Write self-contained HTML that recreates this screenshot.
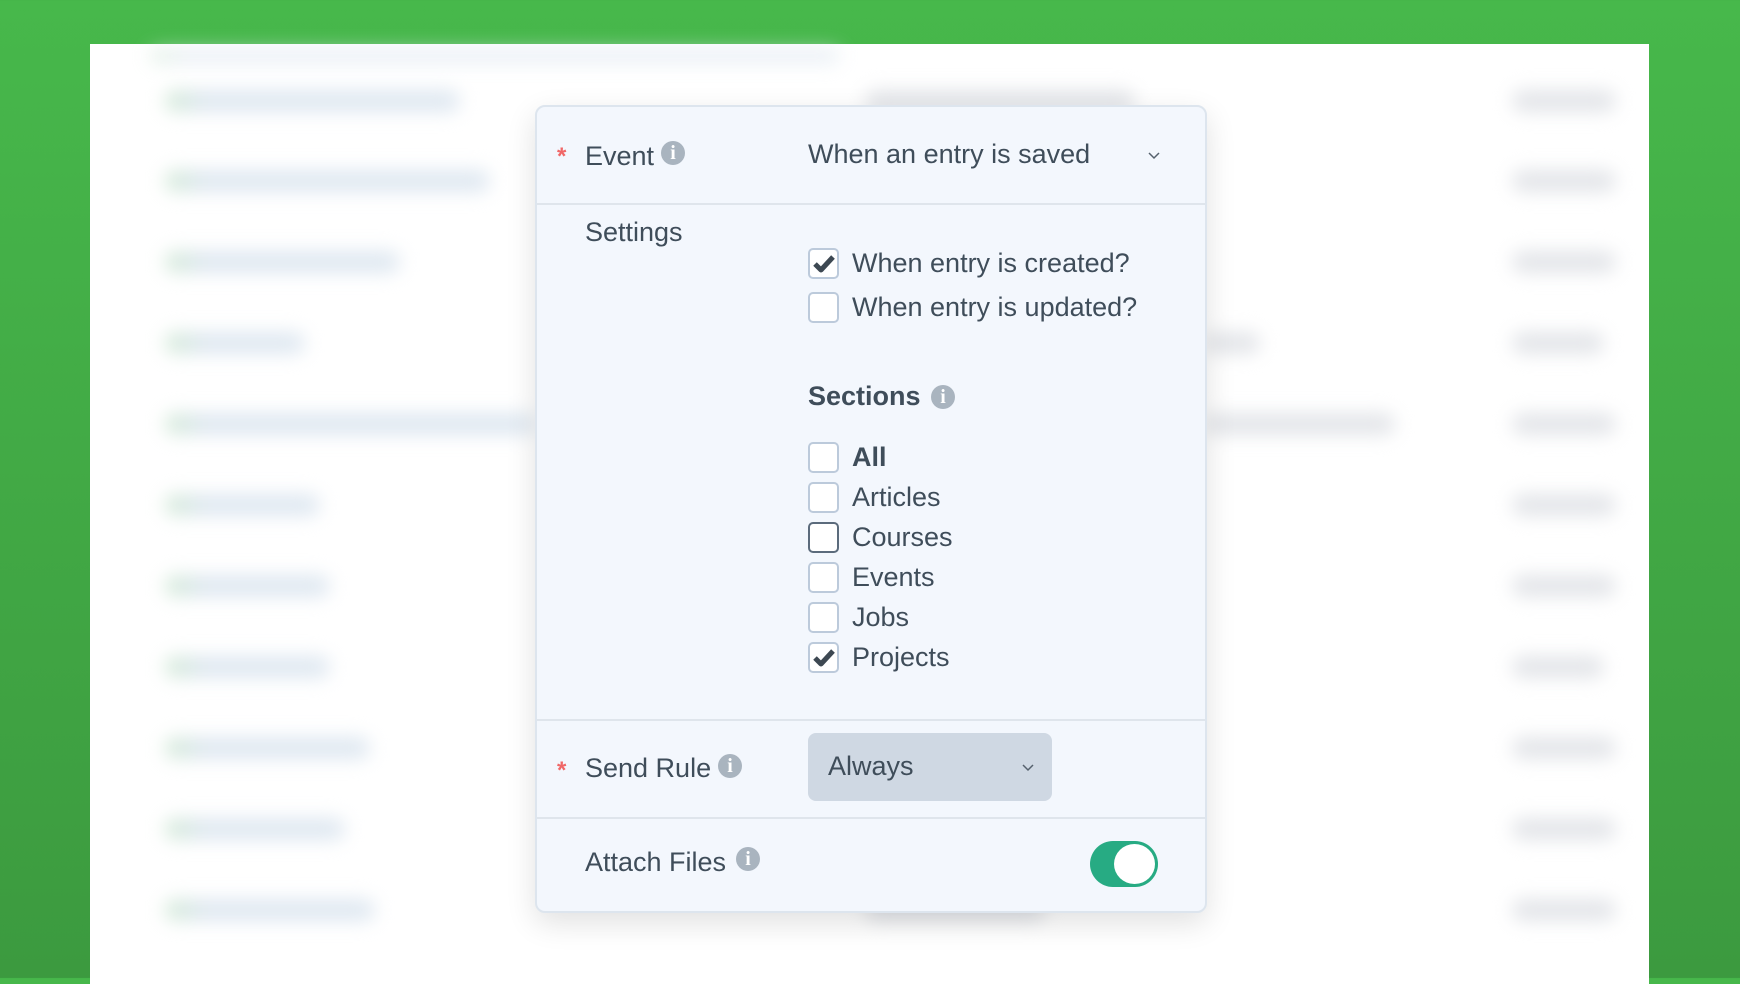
<!DOCTYPE html>
<html><head><meta charset="utf-8"><style>
*{margin:0;padding:0;box-sizing:border-box}
body{width:1740px;height:978px;overflow:hidden;background:linear-gradient(#47b84b,#3c9a3f);font-family:"Liberation Sans",sans-serif;position:relative}
.panel{position:absolute;left:90px;top:44px;width:1559px;height:940px;background:#fff}
.b{position:absolute;height:22px;border-radius:11px;filter:blur(9px)}
.l{background:linear-gradient(90deg,#d3ead6 0,#dfe8f1 40px)}
.g{background:#e3e5e9}
.card{position:absolute;left:535px;top:105px;width:672px;height:808px;background:#f3f7fd;border:2px solid #dde5ee;border-radius:10px;box-shadow:0 10px 30px rgba(0,0,0,.12);color:#3f4d5a}
.hr{position:absolute;left:0;right:0;height:2px;background:#dfe5ec}
.t{position:absolute;font-size:27px;line-height:30px;white-space:nowrap}
.ast{position:absolute;color:#f06767;font-size:24px;font-weight:bold}
.info{position:absolute;width:24px;height:24px;border-radius:50%;background:#a9b4bf;color:#fff;font:bold 20px/25px "Liberation Serif",serif;text-align:center}
.cb{position:absolute;left:271px;width:31px;height:31px;background:#fff;border:2px solid #bccadb;border-radius:5px}
.cb svg{position:absolute;left:2px;top:3px}
</style></head><body>
<div class="panel"></div>
<div class="b l" style="left:150px;top:48px;width:690px;height:16px;opacity:.6"></div>
<div class="b l" style="left:165px;top:90px;width:295px"></div>
<div class="b l" style="left:165px;top:170px;width:325px"></div>
<div class="b l" style="left:165px;top:251px;width:235px"></div>
<div class="b l" style="left:165px;top:332px;width:140px"></div>
<div class="b l" style="left:165px;top:413px;width:370px"></div>
<div class="b l" style="left:165px;top:494px;width:155px"></div>
<div class="b l" style="left:165px;top:575px;width:165px"></div>
<div class="b l" style="left:165px;top:656px;width:165px"></div>
<div class="b l" style="left:165px;top:737px;width:205px"></div>
<div class="b l" style="left:165px;top:818px;width:180px"></div>
<div class="b l" style="left:165px;top:899px;width:210px"></div>
<div class="b g" style="left:865px;top:90px;width:270px"></div>
<div class="b g" style="left:1205px;top:332px;width:55px"></div>
<div class="b g" style="left:1205px;top:413px;width:190px"></div>
<div class="b g" style="left:865px;top:899px;width:180px"></div>
<div class="b g" style="left:1512px;top:90px;width:104px"></div>
<div class="b g" style="left:1512px;top:170px;width:104px"></div>
<div class="b g" style="left:1512px;top:251px;width:104px"></div>
<div class="b g" style="left:1512px;top:332px;width:92px"></div>
<div class="b g" style="left:1512px;top:413px;width:104px"></div>
<div class="b g" style="left:1512px;top:494px;width:104px"></div>
<div class="b g" style="left:1512px;top:575px;width:104px"></div>
<div class="b g" style="left:1512px;top:656px;width:92px"></div>
<div class="b g" style="left:1512px;top:737px;width:104px"></div>
<div class="b g" style="left:1512px;top:818px;width:104px"></div>
<div class="b g" style="left:1512px;top:899px;width:104px"></div>

<div class="card">
  <div class="ast" style="left:20px;top:36px">*</div>
  <div class="t" style="left:48px;top:34px">Event</div>
  <div class="info" style="left:124px;top:34px">i</div>
  <div class="t" style="left:271px;top:32px">When an entry is saved</div>
  <svg style="position:absolute;left:610px;top:44px" width="14" height="10" viewBox="0 0 14 10"><path d="M2 2l5 5 5-5" fill="none" stroke="#55616d" stroke-width="1.5"/></svg>
  <div class="hr" style="top:96px"></div>

  <div class="t" style="left:48px;top:110px">Settings</div>
  <div class="cb" style="top:141px"><svg width="24" height="22" viewBox="0 0 24 22"><path d="M3 11l6 6L21 4" fill="none" stroke="#3d4852" stroke-width="5" stroke-linejoin="round"/></svg></div>
  <div class="t" style="left:315px;top:141px">When entry is created?</div>
  <div class="cb" style="top:185px"></div>
  <div class="t" style="left:315px;top:185px">When entry is updated?</div>

  <div class="t" style="left:271px;top:274px;font-weight:bold">Sections</div>
  <div class="info" style="left:394px;top:278px">i</div>

  <div class="cb" style="top:335px"></div><div class="t" style="left:315px;top:335px;font-weight:bold">All</div>
  <div class="cb" style="top:375px"></div><div class="t" style="left:315px;top:375px">Articles</div>
  <div class="cb" style="top:415px;border-color:#5b6b7c"></div><div class="t" style="left:315px;top:415px">Courses</div>
  <div class="cb" style="top:455px"></div><div class="t" style="left:315px;top:455px">Events</div>
  <div class="cb" style="top:495px"></div><div class="t" style="left:315px;top:495px">Jobs</div>
  <div class="cb" style="top:535px"><svg width="24" height="22" viewBox="0 0 24 22"><path d="M3 11l6 6L21 4" fill="none" stroke="#3d4852" stroke-width="5" stroke-linejoin="round"/></svg></div>
  <div class="t" style="left:315px;top:535px">Projects</div>

  <div class="hr" style="top:612px"></div>
  <div class="ast" style="left:20px;top:650px">*</div>
  <div class="t" style="left:48px;top:646px">Send Rule</div>
  <div class="info" style="left:181px;top:647px">i</div>
  <div style="position:absolute;left:271px;top:626px;width:244px;height:68px;background:#cfd8e3;border-radius:8px"></div>
  <div class="t" style="left:291px;top:644px">Always</div>
  <svg style="position:absolute;left:484px;top:656px" width="14" height="10" viewBox="0 0 14 10"><path d="M2 2l5 5 5-5" fill="none" stroke="#55616d" stroke-width="1.5"/></svg>
  <div class="hr" style="top:710px"></div>

  <div class="t" style="left:48px;top:740px">Attach Files</div>
  <div class="info" style="left:199px;top:740px">i</div>
  <div style="position:absolute;left:553px;top:734px;width:68px;height:46px;border-radius:23px;background:#27ab83"></div>
  <div style="position:absolute;left:577px;top:737px;width:41px;height:40px;border-radius:50%;background:#fff"></div>
</div>
</body></html>
